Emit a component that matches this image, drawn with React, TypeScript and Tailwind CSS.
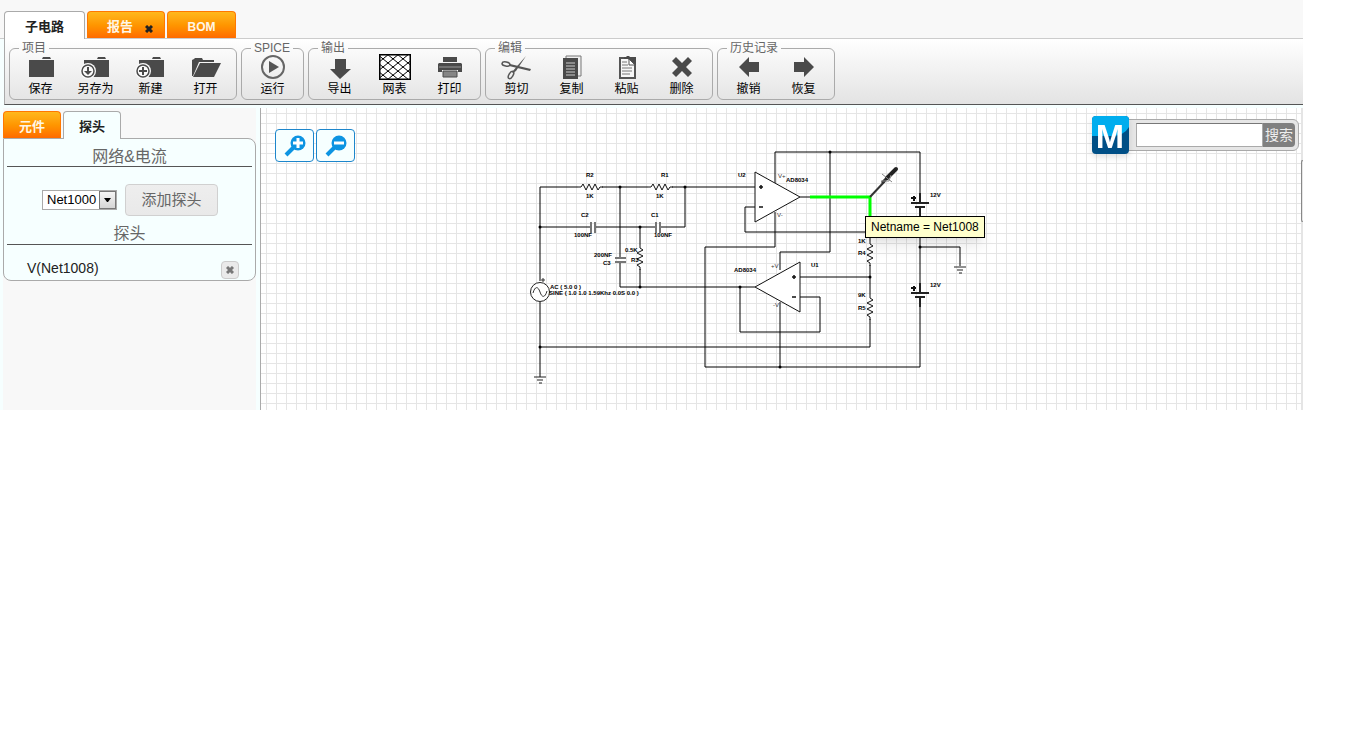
import type { ReactNode } from "react";

interface ToolProps {
    label: string
    children: ReactNode
}

function Tool(props: ToolProps) {
    return (
        <button className="w-[55px] flex flex-col items-center">
            <svg width="35" height="24" viewBox="0 0 35 24" fill="#4a4a4a" className="overflow-visible">
                {props.children}
            </svg>
            <span className="h-4 leading-[18px]">{props.label}</span>
        </button>
    );
}

function ToolGroup(props: ToolProps) {
    return (
        <fieldset className="border border-[#aaa] rounded-md px-[3px] pb-[3px]">
            <legend className="ml-[6px] px-[3px] leading-4 text-[#666]">{props.label}</legend>
            <div className="flex">{props.children}</div>
        </fieldset>
    );
}

function Folder() {
    return <path d="M6 4h25v17H6zM19 3l1-2h7l1 2z" />;
}

function Badge() {
    return (
        <>
            <circle cx="10" cy="15" r="8" fill="#fafafa" />
            <circle cx="10" cy="15" r="6" fill="#fafafa" stroke="#4a4a4a" strokeWidth="1.5" />
        </>
    );
}

function Toolbar() {
    return (
        <div className="
            flex gap-1
            ml-1 pl-1 pt-px pb-1
            border-l border-b border-l-[#aaa] border-b-[#555]
            bg-linear-to-b from-white to-[#e3e3e3]
            text-xs text-black
        ">
            <ToolGroup label="项目">
                <Tool label="保存">
                    <Folder />
                </Tool>
                <Tool label="另存为">
                    <Folder />
                    <Badge />
                    <path d="M9 11h2v4h3l-4 4-4-4h3z" />
                </Tool>
                <Tool label="新建">
                    <Folder />
                    <Badge />
                    <path d="M9 11h2v3h3v2h-3v3H9v-3H6v-2h3z" />
                </Tool>
                <Tool label="打开">
                    <path d="M4 20V4l2-1 1-1h7l1 2h11v2H11L5 20z" />
                    <path d="M12 7h21l-7 14H5z" />
                </Tool>
            </ToolGroup>

            <ToolGroup label="SPICE">
                <Tool label="运行">
                    <circle cx="18" cy="11" r="11" fill="none" stroke="#666" strokeWidth="2" />
                    <path d="M14 5l10 6-10 6z" fill="#555" />
                </Tool>
            </ToolGroup>

            <ToolGroup label="输出">
                <Tool label="导出">
                    <path d="M13 3h11v10h5L18 23 8 13h5z" />
                </Tool>
                <Tool label="网表">
                    <svg x="2" y="-2" width="32" height="26">
                        <rect width="32" height="26" fill="#fff" />
                        <path
                            d="M-22 0L10 26M-12 0L20 26M-2 0L30 26M8 0L40 26M18 0L50 26M-2 26L30 0M8 26L40 0M18 26L50 0M-12 26L20 0M-22 26L10 0"
                            stroke="#000"
                        />
                        <rect width="32" height="26" fill="none" stroke="#000" strokeWidth="3" />
                    </svg>
                </Tool>
                <Tool label="打印">
                    <path d="M11 1h14v5H11zM6 8l1-1h22l1 1v8h-4v-2H10v2H6z" />
                    <path d="M11 15h14v6H11z" fill="#858585" stroke="#4a4a4a" />
                    <path d="M7 11h22" stroke="#999" />
                </Tool>
            </ToolGroup>

            <ToolGroup label="编辑">
                <Tool label="剪切">
                    <path d="M27 0L17 15l-3 2-1-1zM32 13l-1 2L10 10l1-2z" fill="#555" />
                    <ellipse cx="7" cy="8" rx="4" ry="2" fill="none" stroke="#555" strokeWidth="1.5" transform="rotate(10 7 8)" />
                    <ellipse cx="12" cy="19" rx="2" ry="4" fill="none" stroke="#555" strokeWidth="1.5" transform="rotate(32 12 19)" />
                </Tool>
                <Tool label="复制">
                    <path d="M12 0h15v20H12z" fill="#eee" stroke="#777" />
                    <path d="M9 2h15v21H9z" />
                    <path d="M12 7h9M12 10h9M12 13h9M12 16h9M12 19h9" stroke="#ccc" />
                </Tool>
                <Tool label="粘贴">
                    <path d="M11 2h15v20H11z" fill="#f7f7f7" stroke="#555" strokeWidth="2" />
                    <path d="M15 1h2l1-1h2l1 1h6v8l-8-6h-4z" />
                    <path d="M20 3v6h6z" fill="#fff" stroke="#555" />
                    <path d="M13 6h5M13 9h6M13 12h10M13 15h10M13 18h8" stroke="#777" />
                </Tool>
                <Tool label="删除">
                    <path d="M12 1l6 6 6-6 4 4-6 6 6 6-4 4-6-6-6 6-4-4 6-6-6-6z" />
                </Tool>
            </ToolGroup>

            <ToolGroup label="历史记录">
                <Tool label="撤销">
                    <path d="M8 11L18 1v5h10v10H18v5z" />
                </Tool>
                <Tool label="恢复">
                    <path d="M28 11L18 1v5H8v10h10v5z" />
                </Tool>
            </ToolGroup>
        </div>
    );
}

const activeTab = "h-7 -mb-px pt-[2px] rounded-t border border-b-0 border-[#aaa] text-[#222] font-bold text-[13px]";
const orangeTab = "h-[27px] pt-[3px] rounded-t border border-b-0 border-[#ff7800] bg-linear-to-b from-[#ffb81c] via-[#ff9600] to-[#ff6a00] text-[#fff6e6] font-bold";

function Resistor(props: { x: number, y: number, vertical?: boolean }) {
    return (
        <path
            d="M-12 0h3l2-3 3 6 3-6 3 6 3-6 3 6 2-3h3"
            transform={`translate(${props.x} ${props.y}) rotate(${props.vertical ? 90 : 0})`}
            stroke="#111"
        />
    );
}

function Battery(props: { y: number }) {
    return (
        <g transform={`translate(920 ${props.y})`}>
            <path d="M-9 0H9M-5 4H5M0 -10V0M0 4V14" stroke="#222" strokeWidth="2" />
            <path d="M-9 -5h5M-6 -7v5" stroke="#111" strokeWidth="2" />
        </g>
    );
}

const joints = [
    [620, 187], [685, 187], [540, 227], [640, 227], [640, 287], [540, 347], [830, 152],
    [740, 287], [780, 367], [870, 277], [920, 247],
];

const labels: [number, number, string][] = [
    [586, 177, "R2"], [586, 198, "1K"], [661, 177, "R1"], [656, 198, "1K"],
    [581, 217, "C2"], [574, 237, "100NF"], [651, 217, "C1"], [654, 237, "100NF"],
    [594, 257, "200NF"], [603, 265, "C3"], [625, 252, "0.5K"], [631, 262, "R3"],
    [738, 177, "U2"], [786, 182, "AD8034"], [734, 272, "AD8034"], [811, 267, "U1"],
    [858, 243, "1K"], [858, 255, "R4"], [858, 297, "9K"], [858, 310, "R5"],
    [930, 197, "12V"], [930, 287, "12V"],
    [550, 289, "AC ( 5.0 0 )"], [549, 295, "SINE ( 1.0 1.0 1.59Khz 0.0S 0.0 )"],
];

function Circuit() {
    return (
        <svg className="absolute left-[264px] top-[37px]" width="450" height="245" viewBox="525 145 450 245" fill="none">
            {/* wires */}
            <g stroke="#000">
                <path d="M540 281V187H578M602 187H648M672 187H755M685 187V227H661M656 227H595M590 227H540" />
                <path d="M620 187V257M620 262V287H755M640 227V245M640 269V287" />
                <path d="M540 302V377M540 347H870V319M870 295V265M870 241V197M800 197H810" />
                <path d="M755 207H745V232H870M775 183V152H920V203M830 152V252H780V270" />
                <path d="M775 212V247H705V367H920V298M920 207V293M920 247H960V266" />
                <path d="M740 287V332H820V297H800M800 277H870M780 302V367" />
            </g>
            {/* capacitors and grounds */}
            <path d="M591 222v11M595 222v11M656 222v11M660 222v11M615 258h11M615 262h11" stroke="#777" strokeWidth="2" />
            <path d="M534 377h12M537 380h6M539 383h3M954 267h12M957 270h6M959 273h3" stroke="#222" />

            <Resistor x={590} y={187} />
            <Resistor x={660} y={187} />
            <Resistor x={640} y={257} vertical />
            <Resistor x={870} y={253} vertical />
            <Resistor x={870} y={307} vertical />
            <Battery y={203} />
            <Battery y={293} />

            {/* op amps */}
            <path d="M755 172L800 197l-45 25zM800 262L755 287l45 25z" fill="#fff" stroke="#111" />
            <path d="M759 187h4M761 185v4M759 207h4M792 277h4M794 275v4M792 297h4" stroke="#111" strokeWidth="1.5" />

            {/* source */}
            <circle cx="540" cy="292" r="9.5" fill="#fff" stroke="#222" />
            <path d="M533 293c2-7 5-7 7-1s5 6 7-1" stroke="#333" />
            <path d="M541 280h4M543 278v4" stroke="#333" />

            {joints.map(([x, y]) => (
                <circle key={`${x}-${y}`} cx={x} cy={y} r="1.5" fill="#000" />
            ))}

            {/* selected net and probe */}
            <path d="M810 197h60v20" stroke="#0f0" strokeWidth="3" />
            <path d="M870 197l15-16" stroke="#333" strokeWidth="2" />
            <path d="M882 183l6-6" stroke="#333" strokeWidth="3" />
            <path d="M887 178l9-9" stroke="#222" strokeWidth="4" strokeLinecap="round" />
            <path d="M882 174l10 8M881 181h8l2-6" stroke="#888" />

            <g className="font-['Liberation_Sans'] text-[6px] font-bold" fill="#000">
                {labels.map(([x, y, text]) => (
                    <text key={`${x}-${y}`} x={x} y={y}>{text}</text>
                ))}
            </g>
            <g className="font-['Liberation_Sans'] text-[6px]" fill="#333">
                <text x="778" y="178">V+</text>
                <text x="777" y="217">V-</text>
                <text x="771" y="268">+V</text>
                <text x="773" y="307">-V</text>
            </g>
        </svg>
    );
}

function ZoomButton(props: { label: string, sign: string }) {
    return (
        <button aria-label={props.label} className="w-[39px] h-[33px] flex justify-center items-center rounded border border-[#1d86cc] bg-[#f6ffff]">
            <svg width="22" height="22" viewBox="0 0 22 22" fill="none">
                <path d="M2 20l8-8" stroke="#0d94e2" strokeWidth="4" />
                <circle cx="14" cy="8" r="7.5" fill="#0d94e2" />
                <path d={props.sign} stroke="#fff" strokeWidth="3" />
            </svg>
        </button>
    );
}

function Search() {
    return (
        <div className="absolute right-[2px] top-2 flex items-center">
            <svg className="relative z-10 drop-shadow-md" width="37" height="38" viewBox="0 0 37 38">
                <rect width="37" height="38" rx="4" fill="#004f86" />
                <path d="M4 0h29q4 0 4 4v7Q32 20 19 20H0V4q0-4 4-4z" fill="#00adee" />
                <text x="18" y="32" textAnchor="middle" fill="#fff" className="font-['Liberation_Sans'] font-bold text-[34px]">M</text>
            </svg>
            <form className="-ml-1 h-8 pl-[10px] pr-[3px] flex items-center rounded-r-md border border-[#aaa] bg-[#e6e6e6]">
                <input aria-label="搜索" className="w-[127px] h-6 px-1 bg-white border border-[#aaa] border-t-[#777]" />
                <button type="button" className="w-8 h-6 rounded-r bg-[#808080] text-[#eee] text-sm leading-6">搜索</button>
            </form>
        </div>
    );
}

function CrossIcon() {
    return (
        <svg width="8" height="8" viewBox="0 0 8 8" stroke="currentColor" strokeWidth="3">
            <path d="M1 1l6 6M7 1L1 7" />
        </svg>
    );
}

function ProbePanel() {
    return (
        <aside className="w-[253px] ml-[3px] mr-1 shrink-0 pt-[3px] bg-[#f8f8f8]">
            <div className="flex gap-[2px] items-end">
                <button className={`${orangeTab} w-[58px] text-[13px]`}>元件</button>
                <button className={`${activeTab} relative w-[58px] bg-[#f6ffff]`}>探头</button>
            </div>

            <div className="h-[143px] px-[3px] pt-2 rounded-r-lg rounded-bl-lg border border-[#aaa] bg-[#f6ffff]">
                <h2 className="h-5 leading-5 text-center text-base text-[#666] border-b border-[#555]">网络&电流</h2>

                <div className="flex items-center gap-2 ml-[35px] mt-[17px] mb-2">
                    <div className="relative">
                        <select aria-label="网络" className="block appearance-none w-[75px] h-5 pl-1 border border-[#aaa] bg-white text-[13px] leading-4 text-black">
                            <option>Net1000</option>
                        </select>
                        <span className="
                            absolute right-px top-px
                            w-[17px] h-[18px]
                            flex justify-center items-center
                            border border-[#777] bg-linear-to-b from-[#f5f5f5] to-[#d5d5d5]
                            pointer-events-none
                        ">
                            <svg width="7" height="4" viewBox="0 0 7 4"><path d="M0 0h7L4 4H3z" /></svg>
                        </span>
                    </div>
                    <button className="w-[93px] h-8 rounded border border-[#d0d0d0] bg-linear-to-b from-[#eee] to-[#e9e9e9] text-[15px] text-[#666]">添加探头</button>
                </div>

                <h2 className="h-[21px] leading-5 text-center text-base text-[#666] border-b border-[#555]">探头</h2>

                <div className="flex justify-between items-center pl-5 pr-[13px] pt-3">
                    <span className="text-sm text-[#222]">V(Net1008)</span>
                    <button aria-label="删除探头" className="w-[18px] h-[18px] mt-1 flex justify-center items-center rounded border border-[#ccc] bg-[#eaeaea] text-[#777]">
                        <CrossIcon />
                    </button>
                </div>
            </div>
        </aside>
    );
}

export default function App() {
    return (
        <div className="min-h-screen bg-white font-['Liberation_Sans','Noto_Sans_CJK_SC',sans-serif]">
            <div className="mr-[63px] bg-[#f6ffff]">
                <div className="flex gap-[2px] items-end pl-1 pt-[11px] bg-[#f8f8f8] border-b border-[#ccc]">
                    <button className={`${activeTab} relative w-[81px] bg-white`}>子电路</button>
                    <div className={`${orangeTab} w-[78px] flex justify-center items-center gap-3 pl-2 text-[13px]`}>
                        <button>报告</button>
                        <button aria-label="关闭" className="text-[#222] pt-1"><CrossIcon /></button>
                    </div>
                    <button className={`${orangeTab} w-[69px] text-xs`}>BOM</button>
                </div>

                <Toolbar />

                <div className="flex pt-[3px]">
                    <ProbePanel />

                    <main className="
                        relative grow h-[302px]
                        border-l border-l-[#aaa] border-r-2 border-r-[#e5e5e5]
                        bg-white bg-size-[10px_10px] bg-position-[5px_5px]
                        bg-[linear-gradient(to_right,#e5e5e5_1px,transparent_1px),linear-gradient(#e5e5e5_1px,transparent_1px)]
                    ">
                        <div className="absolute left-[14px] top-[21px] flex gap-[2px]">
                            <ZoomButton label="放大" sign="M9 8h10M14 3v10" />
                            <ZoomButton label="缩小" sign="M9 8h10" />
                        </div>

                        <Circuit />

                        <div role="tooltip" className="absolute left-[604px] top-[108px] px-[5px] border border-black bg-[#ffffcc] text-black text-xs leading-5 shadow-lg">
                            Netname = Net1008
                        </div>

                        <Search />
                        <div className="absolute -right-[2px] top-[52px] w-[2px] h-[62px] rounded-l border border-r-0 border-[#888]" />
                    </main>
                </div>
            </div>
        </div>
    );
}
